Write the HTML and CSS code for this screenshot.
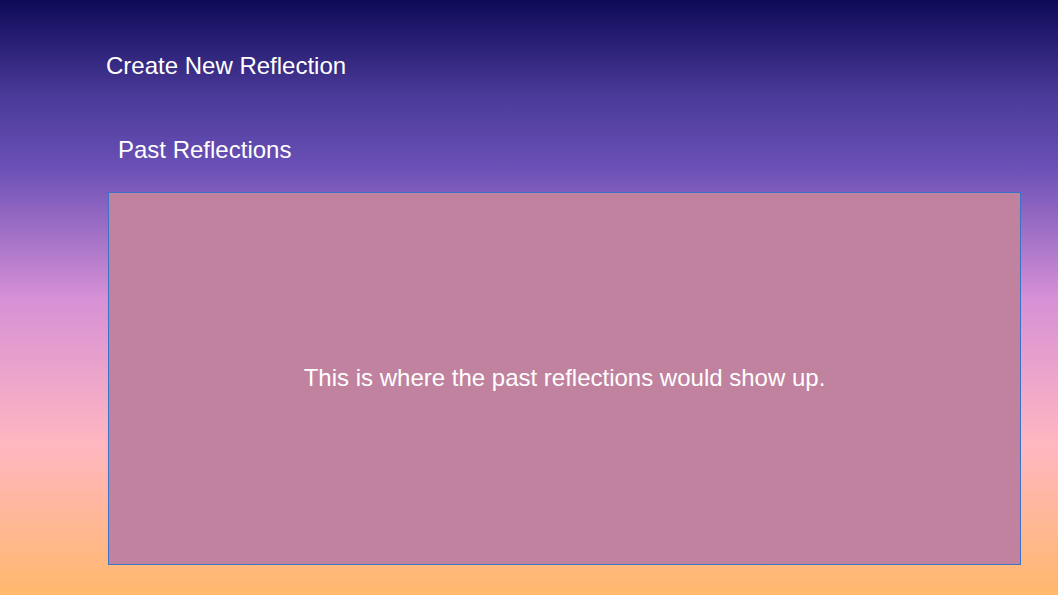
FILE: index.html
```html
<!DOCTYPE html>
<html>
<head>
<meta charset="utf-8">
<link rel="stylesheet" href="styles.css">
</head>
<body>
<main class="page">
  <h1 class="create">Create New Reflection</h1>
  <section class="past">
    <h2 class="past-title">Past Reflections</h2>
    <div class="past-box">
      <p class="placeholder">This is where the past reflections would show up.</p>
    </div>
  </section>
</main>
</body>
</html>
```
FILE: styles.css
```css
html, body {
  margin: 0;
  padding: 0;
}
body {
  width: 1058px;
  height: 595px;
  overflow: hidden;
  font-family: "Liberation Sans", Arial, sans-serif;
  color: #ffffff;
  background: linear-gradient(to bottom, #0e0a58 0%, #4a3a98 16%, #6a50b6 28%, #d690d6 50%, #ffb7c0 75%, #ffb86c 100%);
}
.page {
  display: flex;
  flex-direction: column;
  padding: 52px 0 0 106px;
}
.create {
  margin: 0;
  font-size: 24px;
  font-weight: normal;
  line-height: 28px;
}
.past {
  display: flex;
  flex-direction: column;
  margin-top: 56px;
  margin-left: 2px;
}
.past-title {
  margin: 0 0 0 10px;
  font-size: 24px;
  font-weight: normal;
  line-height: 28px;
}
.past-box {
  margin-top: 28px;
  width: 911px;
  height: 371px;
  border: 1px solid #3a72c6;
  background: #c0829e;
  display: flex;
  align-items: center;
  justify-content: center;
}
.placeholder {
  margin: 0 0 2px 0;
  font-size: 24px;
  line-height: 28px;
}
```
